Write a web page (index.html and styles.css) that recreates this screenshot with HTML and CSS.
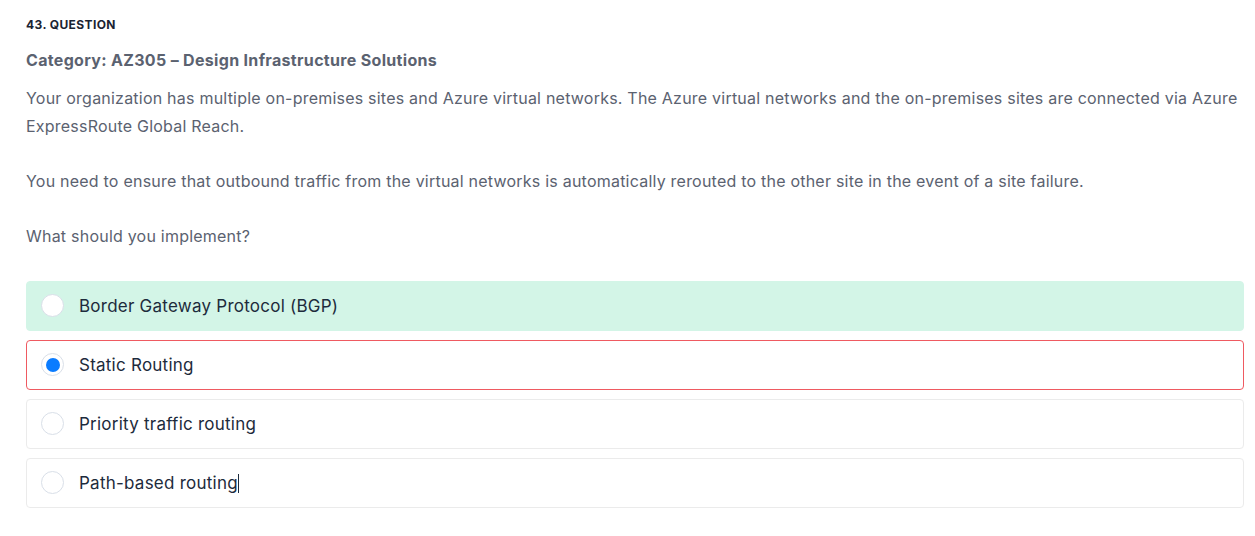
FILE: index.html
```html
<!DOCTYPE html>
<html>
<head>
<meta charset="utf-8">
<link rel="stylesheet" href="styles.css">
</head>
<body>
<div class="page">
  <div class="qnum">43. QUESTION</div>
  <div class="category">Category: AZ305 – Design Infrastructure Solutions</div>
  <div class="qtext">
    <p>Your organization has multiple on-premises sites and Azure virtual networks. The Azure virtual networks and the on-premises sites are connected via Azure ExpressRoute Global Reach.</p>
    <p>You need to ensure that outbound traffic from the virtual networks is automatically rerouted to the other site in the event of a site failure.</p>
    <p>What should you implement?</p>
  </div>
  <ul class="options">
    <li class="option correct"><span class="radio"></span><span class="label">Border Gateway Protocol (BGP)</span></li>
    <li class="option wrong"><span class="radio checked"></span><span class="label">Static Routing</span></li>
    <li class="option"><span class="radio"></span><span class="label">Priority traffic routing</span></li>
    <li class="option"><span class="radio"></span><span class="label">Path-based routing<span class="caret"></span></span></li>
  </ul>
</div>
</body>
</html>
```
FILE: styles.css
```css
html, body {
  margin: 0;
  padding: 0;
  background: #ffffff;
}
body {
  font-family: Inter, "Noto Sans", "Liberation Sans", sans-serif;
}
.page {
  padding: 17px 11px 0 26px;
}
.qnum {
  font-size: 12px;
  font-weight: 700;
  color: #1a2332;
  line-height: 16px;
  letter-spacing: 0.4px;
}
.category {
  margin-top: 17px;
  font-size: 16px;
  font-weight: 700;
  color: #5b6270;
  line-height: 20px;
  letter-spacing: 0.32px;
}
.qtext {
  margin-top: 15px;
  font-size: 16px;
  color: #5b6270;
  line-height: 27.5px;
  letter-spacing: 0.22px;
}
.qtext p {
  margin: 0 0 27.5px 0;
}
.qtext p:last-child {
  margin-bottom: 0;
}
.options {
  list-style: none;
  margin: 30.5px 0 0 0;
  padding: 0;
  display: flex;
  flex-direction: column;
  gap: 9px;
}
.option {
  display: flex;
  align-items: center;
  height: 50px;
  box-sizing: border-box;
  border: 1px solid #ebebeb;
  border-radius: 4px;
  padding-left: 14px;
}
.option.correct {
  background: #d3f5e7;
  border-color: #d3f5e7;
}
.option.wrong {
  border-color: #ef5a61;
}
.radio {
  width: 23px;
  height: 23px;
  box-sizing: border-box;
  border: 1px solid #d9dfe8;
  border-radius: 50%;
  background: #ffffff;
  display: flex;
  align-items: center;
  justify-content: center;
  flex: none;
}
.radio.checked::after {
  content: "";
  width: 14px;
  height: 14px;
  border-radius: 50%;
  background: #0a7cff;
}
.label {
  margin-left: 15px;
  font-size: 17px;
  color: #1d2b3c;
  letter-spacing: 0.24px;
}
.caret {
  display: inline-block;
  width: 1px;
  height: 19px;
  background: #1d2b3c;
  vertical-align: -4px;
}
```
